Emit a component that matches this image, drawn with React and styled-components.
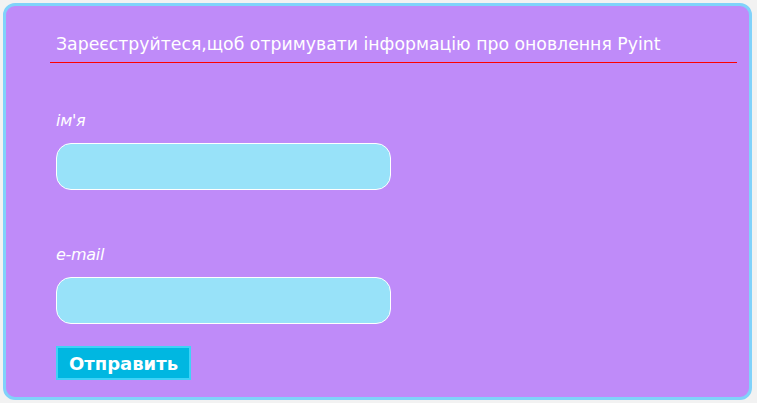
import React from "react";
import styled, { createGlobalStyle } from "styled-components";

const Global = createGlobalStyle`
  html, body { margin: 0; padding: 0; background: #f2f2f2; }
  body { font-family: "DejaVu Sans", Verdana, sans-serif; }
`;

const Card = styled.div`
  margin: 3px 5px 3px 3px;
  height: 391px;
  border: 3px solid #80d2fa;
  border-radius: 12px;
  background: #bf8bf9;
  display: flex;
  flex-direction: column;
`;

const Header = styled.div`
  margin: 27px 12px 0 44px;
  display: flex;
  flex-direction: column;
`;

const Title = styled.h2`
  margin: 0;
  padding: 0 0 6px 6px;
  font-weight: normal;
  font-size: 17.3px;
  line-height: 23px;
  color: #ffffff;
`;

const Rule = styled.div`
  height: 1px;
  background: #ff0000;
`;

const Form = styled.form`
  display: flex;
  flex-direction: column;
  align-items: flex-start;
  padding: 0 0 0 50px;
`;

const Label = styled.label`
  margin-top: ${(p) => p.$top}px;
  font-style: italic;
  font-size: 16px;
  line-height: 20px;
  color: #ffffff;
  letter-spacing: -0.3px;
`;

const Input = styled.input`
  box-sizing: border-box;
  margin-top: 12px;
  width: 335px;
  height: 47px;
  border: 1px solid #ffffff;
  border-radius: 15px;
  background: #98e2f9;
  outline: none;
`;

const Button = styled.button`
  box-sizing: border-box;
  margin-top: 22px;
  height: 34px;
  padding: 0 11px;
  border: 2px solid #3fd2f7;
  background: #00b7e1;
  color: #ffffff;
  font-family: "DejaVu Sans", Verdana, sans-serif;
  font-weight: bold;
  font-size: 18px;
  cursor: pointer;
`;

export default function App() {
  return (
    <>
      <Global />
      <Card>
        <Header>
          <Title>Зареєструйтеся,щоб отримувати інформацію про оновлення Pyint</Title>
          <Rule />
        </Header>
        <Form onSubmit={(e) => e.preventDefault()}>
          <Label $top={48}>ім'я</Label>
          <Input type="text" />
          <Label $top={55}>e-mail</Label>
          <Input type="email" />
          <Button type="submit">Отправить</Button>
        </Form>
      </Card>
    </>
  );
}
